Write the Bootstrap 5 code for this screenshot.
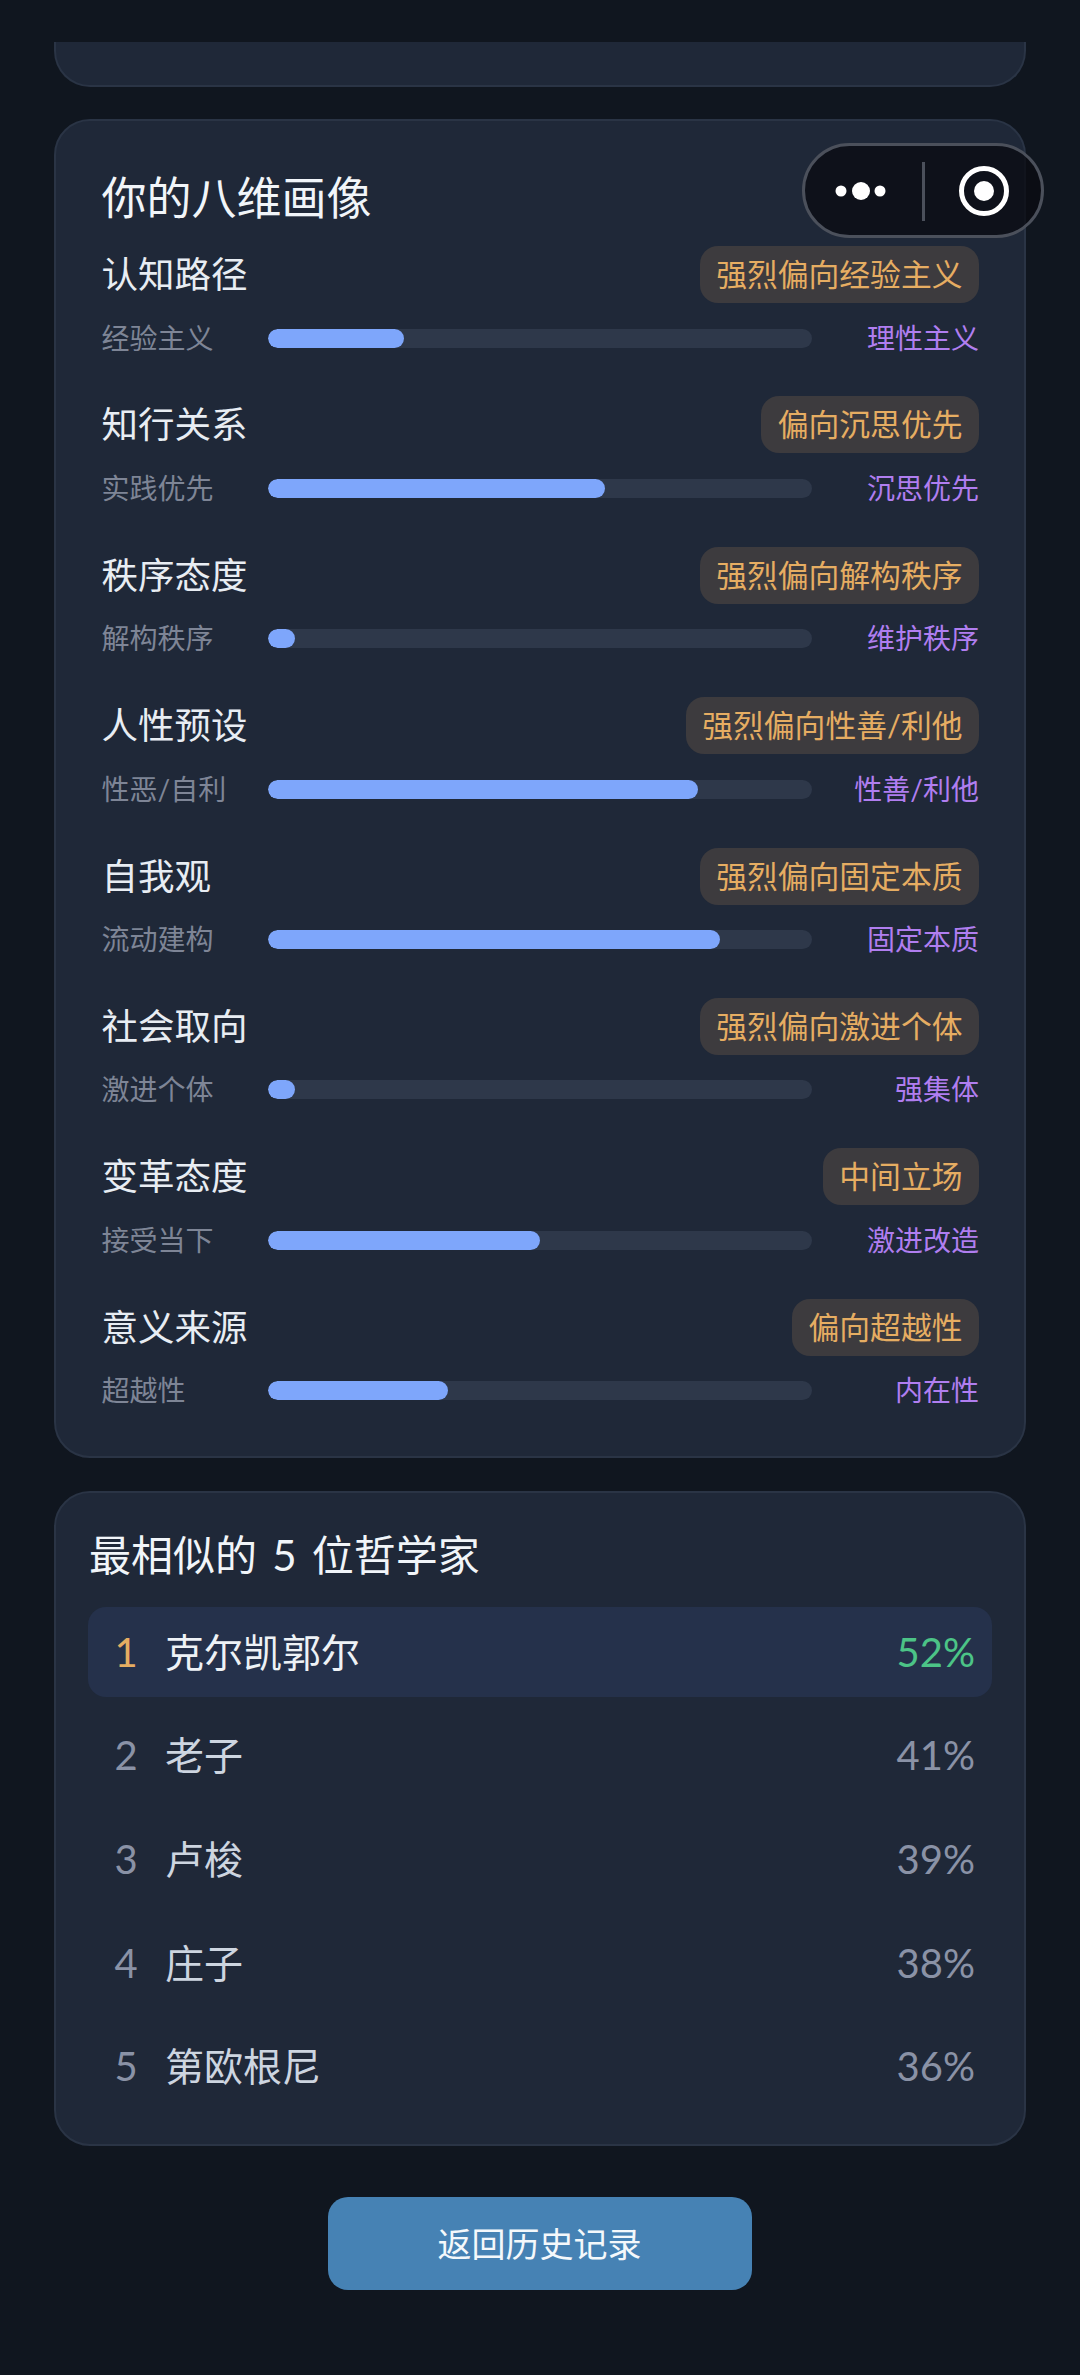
<!DOCTYPE html>
<html lang="zh-CN">
<head>
<meta charset="utf-8">
<title>八维画像</title>
<link rel="stylesheet" href="https://cdn.jsdelivr.net/npm/bootstrap@5.3.0/dist/css/bootstrap.min.css">
<style>
html,body{background:#10161f;height:2375px;overflow:hidden}
body{font-family:Lato,"Noto Sans CJK SC",sans-serif;position:relative;margin:0}
.page-wrap{padding:42px 54px 0}
.pane.card{background:#1f2838;border:2px solid #2a3445;border-radius:36px;color:#e8edf3}
.pane-stub.card{height:45px;border-top:0;border-top-left-radius:0;border-top-right-radius:0;margin-bottom:32px}
.pane-dims{padding:47px 45px 45.5px 45.5px;margin-bottom:33px}
.pane-rank{padding:32px 32px 32.6px}
.pane-title{font-weight:400;color:#f1f5f9;margin:0}
.pane-dims .pane-title{font-size:45px;line-height:60px;margin-bottom:18px}
.pane-rank .pane-title{font-size:42px;line-height:60px;margin-bottom:22px;word-spacing:4.5px;margin-left:1px}
.dim-list{gap:38.9px}
.dim-head{height:57px}
.dim-name{font-size:36.5px;line-height:57px;color:#e8edf3}
.tag.badge{background:#3d3b3e;color:#e6ad62;font-size:30.8px;line-height:57px;height:57px;font-weight:400;padding:0 16.5px;border-radius:18px}
.dim-axis{margin-top:15.5px;height:39px}
.axis-l,.axis-r{flex:none;font-size:28px;line-height:39px;white-space:nowrap}
.axis-l{width:166.5px;color:#7e8596}
.axis-r{width:167px;color:#b07ef0;text-align:right}
.track.progress{flex:1 1 auto;height:19px;background:#2e384a;border-radius:10px}
.track .progress-bar{background:#7ea6fb;border-radius:10px}
.rank-list{gap:13.6px}
.rank-row{height:90px;padding:0 17px;border-radius:18px;font-size:39px;line-height:90px}
.rank-row.top{background:#25314b}
.rank-no{width:42px;text-align:center;margin-right:18px;font-size:40px;color:#8a92a6}
.rank-name{color:#cdd5e0;flex:1 1 auto}
.rank-pct{font-size:40px;color:#8a92a6}
.top .rank-no{color:#e6ad62}
.top .rank-name{color:#eef2f6}
.top .rank-pct{color:#4cc487}
.back-wrap{margin-top:51px}
.back-btn.btn{width:424px;height:93px;background:#4682b4;border:0;border-radius:20px;color:#f4f8fb;font-size:34px;line-height:93px;padding:0;margin-left:-1px}
.capsule{position:absolute;left:802px;top:143px;width:242px;height:95px;border:3px solid #4b505b;border-radius:48px;background:rgba(10,12,18,.78);overflow:hidden}
.capsule svg{position:absolute;left:-3px;top:-3px;display:block}
</style>
</head>
<body>
<div class="page-wrap">
  <div class="card pane pane-stub"></div>

  <section class="card pane pane-dims">
    <h2 class="pane-title">你的八维画像</h2>
    <div class="d-flex flex-column dim-list">
      <div>
        <div class="d-flex justify-content-between dim-head"><span class="dim-name">认知路径</span><span class="badge tag">强烈偏向经验主义</span></div>
        <div class="d-flex align-items-center dim-axis"><span class="axis-l">经验主义</span><div class="progress track"><div class="progress-bar" style="width:25%"></div></div><span class="axis-r">理性主义</span></div>
      </div>
      <div>
        <div class="d-flex justify-content-between dim-head"><span class="dim-name">知行关系</span><span class="badge tag">偏向沉思优先</span></div>
        <div class="d-flex align-items-center dim-axis"><span class="axis-l">实践优先</span><div class="progress track"><div class="progress-bar" style="width:62%"></div></div><span class="axis-r">沉思优先</span></div>
      </div>
      <div>
        <div class="d-flex justify-content-between dim-head"><span class="dim-name">秩序态度</span><span class="badge tag">强烈偏向解构秩序</span></div>
        <div class="d-flex align-items-center dim-axis"><span class="axis-l">解构秩序</span><div class="progress track"><div class="progress-bar" style="width:5%"></div></div><span class="axis-r">维护秩序</span></div>
      </div>
      <div>
        <div class="d-flex justify-content-between dim-head"><span class="dim-name">人性预设</span><span class="badge tag">强烈偏向性善/利他</span></div>
        <div class="d-flex align-items-center dim-axis"><span class="axis-l">性恶/自利</span><div class="progress track"><div class="progress-bar" style="width:79%"></div></div><span class="axis-r">性善/利他</span></div>
      </div>
      <div>
        <div class="d-flex justify-content-between dim-head"><span class="dim-name">自我观</span><span class="badge tag">强烈偏向固定本质</span></div>
        <div class="d-flex align-items-center dim-axis"><span class="axis-l">流动建构</span><div class="progress track"><div class="progress-bar" style="width:83%"></div></div><span class="axis-r">固定本质</span></div>
      </div>
      <div>
        <div class="d-flex justify-content-between dim-head"><span class="dim-name">社会取向</span><span class="badge tag">强烈偏向激进个体</span></div>
        <div class="d-flex align-items-center dim-axis"><span class="axis-l">激进个体</span><div class="progress track"><div class="progress-bar" style="width:5%"></div></div><span class="axis-r">强集体</span></div>
      </div>
      <div>
        <div class="d-flex justify-content-between dim-head"><span class="dim-name">变革态度</span><span class="badge tag">中间立场</span></div>
        <div class="d-flex align-items-center dim-axis"><span class="axis-l">接受当下</span><div class="progress track"><div class="progress-bar" style="width:50%"></div></div><span class="axis-r">激进改造</span></div>
      </div>
      <div>
        <div class="d-flex justify-content-between dim-head"><span class="dim-name">意义来源</span><span class="badge tag">偏向超越性</span></div>
        <div class="d-flex align-items-center dim-axis"><span class="axis-l">超越性</span><div class="progress track"><div class="progress-bar" style="width:33%"></div></div><span class="axis-r">内在性</span></div>
      </div>
    </div>
  </section>

  <section class="card pane pane-rank">
    <h2 class="pane-title">最相似的 5 位哲学家</h2>
    <div class="d-flex flex-column rank-list">
      <div class="d-flex rank-row top"><span class="rank-no">1</span><span class="rank-name">克尔凯郭尔</span><span class="rank-pct">52%</span></div>
      <div class="d-flex rank-row"><span class="rank-no">2</span><span class="rank-name">老子</span><span class="rank-pct">41%</span></div>
      <div class="d-flex rank-row"><span class="rank-no">3</span><span class="rank-name">卢梭</span><span class="rank-pct">39%</span></div>
      <div class="d-flex rank-row"><span class="rank-no">4</span><span class="rank-name">庄子</span><span class="rank-pct">38%</span></div>
      <div class="d-flex rank-row"><span class="rank-no">5</span><span class="rank-name">第欧根尼</span><span class="rank-pct">36%</span></div>
    </div>
  </section>

  <div class="d-flex justify-content-center back-wrap">
    <button type="button" class="btn back-btn">返回历史记录</button>
  </div>
</div>

<div class="capsule">
  <svg width="242" height="95" viewBox="0 0 242 95" fill="#fff">
    <circle cx="39" cy="48" r="5.5"/>
    <circle cx="59" cy="48" r="9"/>
    <circle cx="78" cy="48" r="5.5"/>
    <rect x="120" y="19" width="3" height="59" fill="#4b505b"/>
    <circle cx="182" cy="48" r="22.5" fill="none" stroke="#fff" stroke-width="5"/>
    <circle cx="182" cy="48" r="10"/>
  </svg>
</div>
<script src="https://cdn.jsdelivr.net/npm/bootstrap@5.3.0/dist/js/bootstrap.bundle.min.js"></script>
</body>
</html>
